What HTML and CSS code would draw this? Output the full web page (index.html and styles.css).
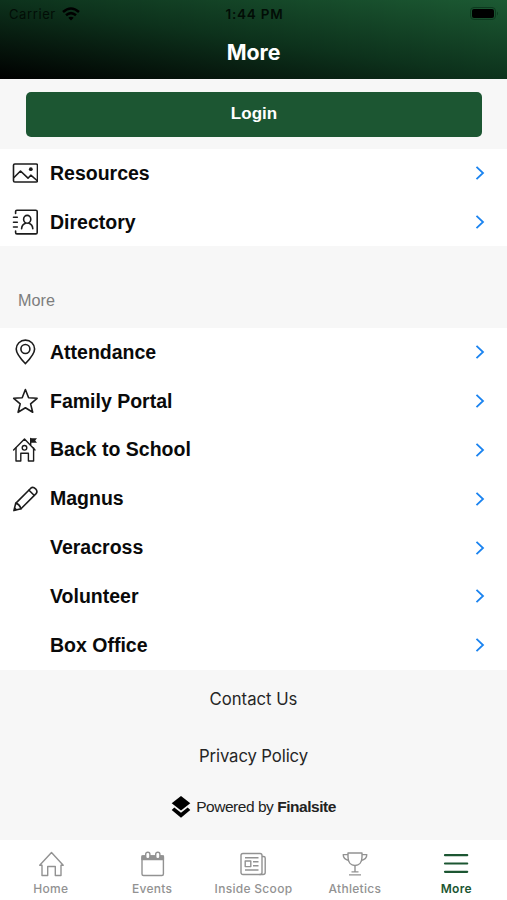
FILE: index.html
```html
<!DOCTYPE html>
<html lang="en">

<head>
  <meta charset="UTF-8">
  <meta name="viewport" content="width=device-width, initial-scale=1.0">
  <title>More</title>
  <link rel="stylesheet" href="styles.css">
</head>

<body>
  <header class="header">
    <div class="status-bar">
      <div class="carrier">
        <span>Carrier</span>
        <svg class="wifi" viewBox="0 0 18 14">
          <path d="M1 5 Q9 -2 17 5" />
          <path d="M4 8.3 Q9 4 14 8.3" />
          <path class="dot" d="M6.3 10.8 Q9 8.6 11.7 10.8 L9 13.5 Z" />
        </svg>
      </div>
      <span class="time">1:44 PM</span>
      <svg class="battery" viewBox="0 0 30 14">
        <rect class="shell" x="0.5" y="0.5" width="25" height="12" rx="3.5" />
        <rect x="2" y="2" width="22" height="9" rx="2" />
        <path class="cap" d="M27 4.5 Q29 6.5 27 8.5 Z" />
      </svg>
    </div>
    <h1 class="title">More</h1>
  </header>

  <main>
    <div class="login">
      <button class="login-button">Login</button>
    </div>

    <ul class="list top">
      <li class="row">
        <svg class="icon" viewBox="0 0 26 26">
          <rect x="1.5" y="4" width="24" height="18" rx="1.3" />
          <path d="M2 17.5 L8.5 11 L16 18.2 L18.8 15.2 L25 20.5" />
          <circle class="fill" cx="18.8" cy="9.2" r="1.9" />
        </svg>
        <span class="label">Resources</span>
        <svg class="chevron" viewBox="0 0 10 16"><path d="M1.5 1.8 L8 8 L1.5 14.2" /></svg>
      </li>
      <li class="row">
        <svg class="icon" viewBox="0 0 26 26">
          <path d="M3.6 4.5 V2.5 Q3.6 1.2 4.9 1.2 H23.8 Q25.2 1.2 25.2 2.5 V23.5 Q25.2 24.9 23.8 24.9 H4.9 Q3.6 24.9 3.6 23.5 V22" />
          <path d="M1.5 8.3 H5.3 M1.5 13.2 H5.3 M1.5 18 H5.3" />
          <ellipse cx="15.2" cy="10.3" rx="3.6" ry="3.9" />
          <path d="M9.6 19.8 Q9.8 15.7 13.5 14.3 M16.9 14.3 Q20.6 15.7 20.8 19.8" />
        </svg>
        <span class="label">Directory</span>
        <svg class="chevron" viewBox="0 0 10 16"><path d="M1.5 1.8 L8 8 L1.5 14.2" /></svg>
      </li>
    </ul>

    <h2 class="section-title">More</h2>

    <ul class="list">
      <li class="row">
        <svg class="icon" viewBox="0 0 26 26">
          <path d="M13.4 24.6 C9.9 21 4.2 15.2 4.2 10 A9.2 8.9 0 0 1 22.6 10 C22.6 15.2 16.9 21 13.4 24.6 Z" />
          <circle cx="13.4" cy="10" r="4.5" />
        </svg>
        <span class="label">Attendance</span>
        <svg class="chevron" viewBox="0 0 10 16"><path d="M1.5 1.8 L8 8 L1.5 14.2" /></svg>
      </li>
      <li class="row">
        <svg class="icon" viewBox="0 0 26 26">
          <path d="M13.4 1.5 L16.6 9.7 L25.1 10.3 L18.6 15.9 L20.7 24.3 L13.4 19.7 L6.1 24.3 L8.2 15.9 L1.7 10.3 L10.2 9.7 Z" />
        </svg>
        <span class="label">Family Portal</span>
        <svg class="chevron" viewBox="0 0 10 16"><path d="M1.5 1.8 L8 8 L1.5 14.2" /></svg>
      </li>
      <li class="row">
        <svg class="icon thin" viewBox="0 0 26 26">
          <path d="M4 11 V24 H8.8 V16.2 H16.4 V24 H21.6 V11" />
          <path d="M1.6 13 L12.5 2 L23 13 M18.7 8.4 V1.5" />
          <circle cx="12.5" cy="10.8" r="2.3" />
          <path class="fill" d="M18.7 1.2 H25 L23.2 3.5 L25 5.8 H18.7 Z" />
        </svg>
        <span class="label">Back to School</span>
        <svg class="chevron" viewBox="0 0 10 16"><path d="M1.5 1.8 L8 8 L1.5 14.2" /></svg>
      </li>
      <li class="row">
        <svg class="icon" viewBox="0 0 26 26">
          <path d="M1.9 24.6 L3.7 17.4 L18.8 2.2 Q20.9 0.3 23.6 2.8 Q26 5.5 24.1 7.6 L9 22.7 Z" />
          <path d="M17 4.2 L22.1 9.3 M3.7 17.4 Q7.4 18 9 22.7" />
          <path class="fill" d="M1.9 24.8 L2.6 21 L5.5 23.8 Z" />
        </svg>
        <span class="label">Magnus</span>
        <svg class="chevron" viewBox="0 0 10 16"><path d="M1.5 1.8 L8 8 L1.5 14.2" /></svg>
      </li>
      <li class="row">
        <span class="icon"></span>
        <span class="label">Veracross</span>
        <svg class="chevron" viewBox="0 0 10 16"><path d="M1.5 1.8 L8 8 L1.5 14.2" /></svg>
      </li>
      <li class="row">
        <span class="icon"></span>
        <span class="label">Volunteer</span>
        <svg class="chevron" viewBox="0 0 10 16"><path d="M1.5 1.8 L8 8 L1.5 14.2" /></svg>
      </li>
      <li class="row">
        <span class="icon"></span>
        <span class="label">Box Office</span>
        <svg class="chevron" viewBox="0 0 10 16"><path d="M1.5 1.8 L8 8 L1.5 14.2" /></svg>
      </li>
    </ul>

    <div class="links">
      <a class="link">Contact Us</a>
      <a class="link privacy">Privacy Policy</a>
      <div class="powered">
        <svg class="logo" viewBox="0 0 20 22">
          <path d="M10 0 L19.3 7.3 L10 14.6 L0.7 7.3 Z" />
          <path d="M3.3 11.6 L10 16.8 L16.7 11.6 L19.3 14 L10 21.7 L0.7 14 Z" />
        </svg>
        <span>Powered by <b>Finalsite</b></span>
      </div>
    </div>
  </main>

  <!-- Bottom tabs -->
  <nav class="tabs">
    <a class="tab">
      <svg class="tab-icon" viewBox="0 0 26 26">
        <path d="M1.7 14.3 L13.5 1.5 L25.2 14.3 H23 V24.5 H17.3 V15.5 H9.7 V24.5 H4 V14.3 Z" />
      </svg>
      <span>Home</span>
    </a>
    <a class="tab">
      <svg class="tab-icon" viewBox="0 0 26 26">
        <rect x="3" y="5" width="21.4" height="19.5" rx="1.5" />
        <path class="fill" d="M3 5 H24.4 V8.5 H3 Z" />
        <rect class="ring" x="6.7" y="1.2" width="4.2" height="6.5" rx="2" />
        <rect class="ring" x="16.7" y="1.2" width="4.2" height="6.5" rx="2" />
      </svg>
      <span>Events</span>
    </a>
    <a class="tab">
      <svg class="tab-icon" viewBox="0 0 26 26">
        <rect x="1" y="2.5" width="21" height="21" rx="2" />
        <path d="M22 5.5 H23.5 Q25.2 5.5 25.2 7 V21.5 Q25.2 23.5 23 23.5 H19.5" />
        <path d="M5 6.7 H18.5 M13 10.7 H18.5 M13 14.8 H18.5 M5 19 H18.5" />
        <rect x="5.2" y="10" width="5.6" height="5.6" />
      </svg>
      <span>Inside Scoop</span>
    </a>
    <a class="tab">
      <svg class="tab-icon" viewBox="0 0 26 26">
        <path d="M6 2 H20 V6 C20 11.5 17 14.5 13 14.5 C9 14.5 6 11.5 6 6 Z" />
        <path d="M6 3.6 H1.2 Q1.2 8.5 7 9.5 M20 3.6 H24.8 Q24.8 8.5 19 9.5" />
        <path d="M13 14.5 V20.7 M9.5 20.9 H16.5 M7 23.9 H19" />
      </svg>
      <span>Athletics</span>
    </a>
    <a class="tab active">
      <svg class="tab-icon" viewBox="0 0 26 26">
        <path d="M2 4.2 H24.2 M2 12.5 H24.2 M2 20.8 H24.2" />
      </svg>
      <span>More</span>
    </a>
  </nav>
</body>

</html>
```

FILE: styles.css
```css
body {
  margin: 0;
  width: 507px;
  height: 900px;
  overflow: hidden;
  display: flex;
  flex-direction: column;
  background: #f7f7f7;
  color: #0a0a0a;
  font-family: Inter, sans-serif;
}

main {
  flex: 1;
}

/* Header */
.header {
  height: 79px;
  background: linear-gradient(to top right, #000, #0d321c 50%, #1c5a33);
}

.status-bar {
  display: grid;
  grid-template-columns: 1fr auto 1fr;
  align-items: center;
  height: 27px;
  padding: 0 7px 0 9px;
  box-sizing: border-box;
  color: #020d06;
  font-size: 13px;
}

.carrier {
  display: flex;
  align-items: center;
  gap: 6px;
  letter-spacing: 0.6px;
}

.wifi {
  width: 18px;
  height: 14px;
  fill: none;
  stroke: #000;
  stroke-width: 2.5;
}

.wifi .dot {
  fill: #000;
  stroke: none;
}

.time {
  font-size: 13.5px;
  font-weight: 600;
  letter-spacing: 0.8px;
}

.battery {
  width: 30px;
  height: 14px;
  justify-self: end;
}

.battery .shell {
  fill: none;
  stroke: #0d3a1f;
}

.battery .cap {
  fill: #0d3a1f;
}

.title {
  margin: 0;
  color: #fff;
  font-size: 21.3px;
  font-weight: 700;
  line-height: 50px;
  text-align: center;
}

/* Login */
.login {
  padding: 12.5px 25px 12px 26px;
}

.login-button {
  display: block;
  width: 100%;
  height: 45px;
  border: 0;
  border-radius: 5px;
  background: #1c5632;
  color: #fff;
  font-family: "Liberation Sans", Arial, sans-serif;
  font-size: 17px;
  font-weight: 700;
}

/* Lists */
.list {
  margin: 0;
  padding: 0;
  list-style: none;
  background: #fff;
}

.row {
  display: flex;
  align-items: center;
  height: 48.86px;
  padding: 0 22px 0 12px;
}

.icon {
  width: 26px;
  height: 26px;
  margin-right: 12px;
  fill: none;
  stroke: #1c1c1c;
  stroke-width: 1.6;
  stroke-linejoin: round;
  stroke-linecap: round;
}

.icon.thin {
  stroke-width: 1.4;
}

.icon .fill {
  fill: #1c1c1c;
  stroke: none;
}

.label {
  flex: 1;
  font-family: "Liberation Sans", Arial, sans-serif;
  font-size: 19.5px;
  font-weight: 700;
}

.top .label {
  padding-top: 2px;
}

.chevron {
  width: 10px;
  height: 16px;
  fill: none;
  stroke: #1a83f0;
  stroke-width: 1.8;
}

.section-title {
  margin: 0;
  padding: 43.5px 18px 17px;
  color: #7d7d7d;
  font-family: "Liberation Sans", Arial, sans-serif;
  font-size: 16.2px;
  font-weight: 400;
  line-height: 21px;
}

/* Footer links */
.links {
  display: flex;
  flex-direction: column;
  align-items: center;
  padding-top: 18px;
}

.link {
  color: #262626;
  font-size: 16.7px;
  line-height: 22px;
}

.privacy {
  margin-top: 35px;
  letter-spacing: -0.1px;
}

.powered {
  display: flex;
  align-items: center;
  gap: 5px;
  margin-top: 29px;
  color: #222;
  font-family: "Liberation Sans", Arial, sans-serif;
  font-size: 15.5px;
  letter-spacing: -0.47px;
}

.logo {
  width: 20px;
  height: 22px;
  fill: #000;
}

/* Bottom tabs */
.tabs {
  display: grid;
  grid-template-columns: repeat(5, 1fr);
  height: 60px;
  background: #fff;
}

.tab {
  display: flex;
  flex-direction: column;
  align-items: center;
  padding-top: 11px;
  color: #929292;
  font-size: 12px;
  font-weight: 500;
  line-height: 16px;
  letter-spacing: 0.3px;
  white-space: nowrap;
}

.tab-icon {
  width: 26px;
  height: 26px;
  margin-bottom: 4px;
  fill: none;
  stroke: #929292;
  stroke-width: 1.4;
  stroke-linejoin: round;
}

.tab-icon .fill {
  fill: #929292;
}

.tab-icon .ring {
  fill: #fff;
}

.tab.active {
  color: #1c5632;
  font-weight: 600;
}

.active .tab-icon {
  stroke: #1c5632;
  stroke-width: 2.2;
  stroke-linecap: round;
}
```
